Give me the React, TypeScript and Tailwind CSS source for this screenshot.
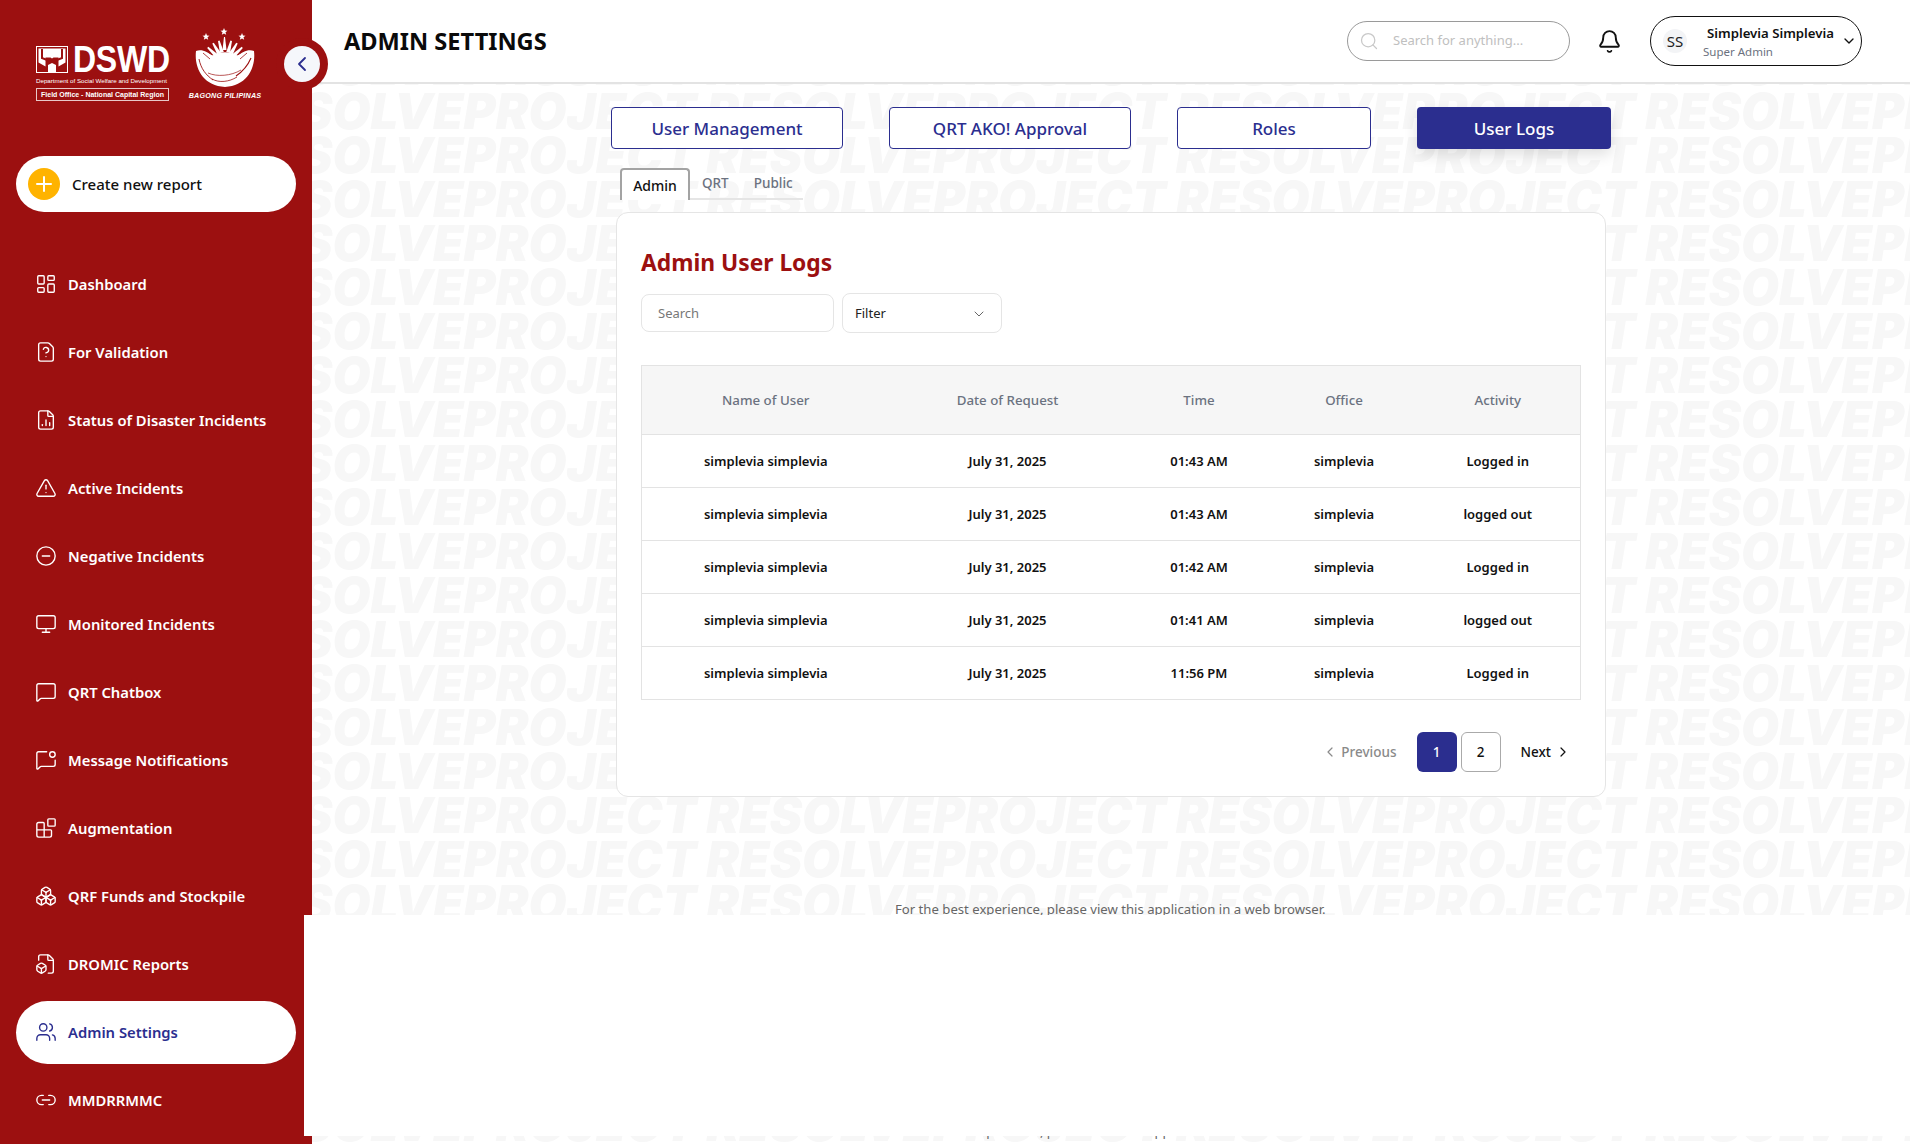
import React from 'react';
import {
  LayoutDashboard, FileQuestionMark, FileChartColumn, TriangleAlert, CircleMinus, Monitor,
  MessageSquare, MessageSquareDot, Blocks, Boxes, FileBox, Users, Link2, Plus, ChevronLeft,
  ChevronRight, ChevronDown, Search, Bell,
} from 'lucide-react';

const nav = [
  { label: 'Dashboard', Icon: LayoutDashboard },
  { label: 'For Validation', Icon: FileQuestionMark },
  { label: 'Status of Disaster Incidents', Icon: FileChartColumn },
  { label: 'Active Incidents', Icon: TriangleAlert },
  { label: 'Negative Incidents', Icon: CircleMinus },
  { label: 'Monitored Incidents', Icon: Monitor },
  { label: 'QRT Chatbox', Icon: MessageSquare },
  { label: 'Message Notifications', Icon: MessageSquareDot },
  { label: 'Augmentation', Icon: Blocks },
  { label: 'QRF Funds and Stockpile', Icon: Boxes },
  { label: 'DROMIC Reports', Icon: FileBox },
  { label: 'Admin Settings', Icon: Users, active: true },
  { label: 'MMDRRMMC', Icon: Link2 },
];

const rows = [
  ['simplevia simplevia', 'July 31, 2025', '01:43 AM', 'simplevia', 'Logged in'],
  ['simplevia simplevia', 'July 31, 2025', '01:43 AM', 'simplevia', 'logged out'],
  ['simplevia simplevia', 'July 31, 2025', '01:42 AM', 'simplevia', 'Logged in'],
  ['simplevia simplevia', 'July 31, 2025', '01:41 AM', 'simplevia', 'logged out'],
  ['simplevia simplevia', 'July 31, 2025', '11:56 PM', 'simplevia', 'Logged in'],
];

const topTabs = [
  { label: 'User Management', w: 'w-[232px]' },
  { label: 'QRT AKO! Approval', w: 'w-[242px]' },
  { label: 'Roles', w: 'w-[194px]' },
  { label: 'User Logs', w: 'w-[194px]', active: true },
];

function Watermark() {
  return (
    <div aria-hidden className="absolute inset-0 overflow-hidden pt-[46px] select-none">
      {Array.from({ length: 25 }).map((_, i) => (
        <div
          key={i}
          className="h-[44px] leading-[44px] whitespace-nowrap text-[49px] font-black italic text-[#f7f7f7] font-['Inter',sans-serif] -ml-[6px]"
        >
          {'PROJECT RESOLVE'.repeat(5)}
        </div>
      ))}
    </div>
  );
}

function Emblem() {
  const rays = [-62, -46, -30, -15, 0, 15, 30, 46, 62];
  return (
    <svg width="60" height="62" viewBox="0 0 60 62" className="-mt-[5px]">
      <g fill="white">
        <path d="M29 0l1 2.500 2.500.2-2 1.600.7 2.500-2.200-1.400-2.200 1.400.7-2.500-2-1.600 2.500-.2z" />
        <path d="M11 5l1 2.500 2.500.2-2 1.600.7 2.500-2.200-1.400-2.200 1.400.7-2.500-2-1.600 2.500-.2z" />
        <path d="M47 5l1 2.500 2.500.2-2 1.600.7 2.500-2.200-1.400-2.200 1.400.7-2.500-2-1.600 2.500-.2z" />
        {rays.map((a) => (
          <path
            key={a}
            d={a === 0 ? 'M27.500 22L29 9l1 0 1.500 13z' : 'M28 24L29.200 12h1.600L32 24z'}
            transform={`rotate(${a} 30 36)`}
          />
        ))}
        <path d="M1 23 C7 21 13 24 17 28 C24 23 36 23 43 28 C47 24 53 21 59 23 C61 40 52 58 30 59 C8 58 -1 40 1 23z" />
      </g>
      <g stroke="#9c1010" fill="none">
        <path d="M8 25l7 6" strokeWidth="0.800" />
        <path d="M52 25l-7 6" strokeWidth="0.800" />
        <path d="M13 45 C22 49 36 48 46 42" strokeWidth="0.700" />
        <path d="M17 51 C24 55 34 54 42 49" strokeWidth="0.800" />
        <path d="M4 31 C6 41 11 47 18 52" strokeWidth="0.900" />
        <path d="M56 30 C53 37 47 44 41 48" strokeWidth="1.100" />
      </g>
    </svg>
  );
}

function Logo() {
  return (
    <div className="flex h-[156px] pl-9 pt-[33px] gap-[20px] text-white">
      <div className="w-[133px]">
        <div className="flex items-center h-[27px] mt-[13px] gap-[5px]">
          <svg width="32" height="27" viewBox="0 0 32 27" fill="none" stroke="white" className="shrink-0">
            <rect x="0.5" y="0.5" width="31" height="26" strokeWidth="1" />
            <path d="M2.5 2.5h27v14l-7 4v-9h-5l-1.500 1-1.500-1h-5v9l-7-4z" fill="white" stroke="none" />
            <path d="M6 3v9l10 4 10-4V3" stroke="#9c1010" strokeWidth="2" />
            <path d="M12 19l4-2 4 2v7h-8z" fill="white" stroke="none" />
          </svg>
          <span className="block origin-left scale-x-[0.89] text-[36px] leading-[27px] font-bold font-['Liberation_Sans',sans-serif] tracking-[-0.3px]">
            DSWD
          </span>
        </div>
        <div className="mt-[3px] text-[6.2px] leading-[9px] whitespace-nowrap font-['Liberation_Sans',sans-serif]">
          Department of Social Welfare and Development
        </div>
        <div className="mt-[3px] h-[13px] border border-[#e8c8c8] text-[7px] leading-[11px] font-bold text-center whitespace-nowrap font-['Liberation_Sans',sans-serif]">
          Field Office - National Capital Region
        </div>
      </div>
      <div className="w-[74px] -ml-[1px] flex flex-col items-center">
        <Emblem />
        <div className="mt-[1px] text-[7.200px] leading-[9px] font-bold italic whitespace-nowrap font-['Liberation_Sans',sans-serif] tracking-[0.2px]">
          BAGONG PILIPINAS
        </div>
      </div>
    </div>
  );
}

function Sidebar() {
  return (
    <aside className="relative z-20 w-[312px] shrink-0 h-full bg-[#9c1010]">
      <Logo />
      <div className="absolute left-[276px] top-[38px] w-[52px] h-[52px] rounded-full bg-[#9c1010] flex items-center justify-center">
        <button className="w-9 h-9 rounded-full bg-[#f5f7fb] flex items-center justify-center text-[#2b2e8f]">
          <ChevronLeft size={24} strokeWidth={1.800} />
        </button>
      </div>
      <div className="mx-4 w-[280px] h-[56px] rounded-[28px] bg-white flex items-center pl-3 gap-[12px]">
        <span className="w-8 h-8 rounded-full bg-[#ffb300] flex items-center justify-center text-white">
          <Plus size={24} strokeWidth={2} />
        </span>
        <span className="text-[15px] font-medium text-[#111]">Create new report</span>
      </div>
      <nav className="mt-[38px]">
        {nav.map(({ label, Icon, active }) => (
          <div key={label} className="h-[68px] flex items-center">
            <div
              className={
                active
                  ? 'mx-4 w-[280px] h-[63px] rounded-[32px] bg-white flex items-center pl-[19px] gap-[11px] text-[#2b2e8f]'
                  : 'mx-4 w-[280px] h-[63px] flex items-center pl-[19px] gap-[11px] text-white'
              }
            >
              <Icon size={22} strokeWidth={1.500} />
              <span className="text-[14.8px] font-semibold whitespace-nowrap">{label}</span>
            </div>
          </div>
        ))}
      </nav>
    </aside>
  );
}

function Header() {
  return (
    <header className="relative z-10 h-[84px] shrink-0 bg-white border-b-2 border-[#e3e3e3] flex items-center pl-[32px]">
      <h1 className="text-[23.6px] font-bold text-[#0a0a0a] mt-[2px]">ADMIN SETTINGS</h1>
      <div className="ml-auto flex items-center">
        <div className="w-[223px] h-10 rounded-full border border-[#9a9a9a] bg-white flex items-center pl-[11px] gap-[14px]">
          <Search size={20} strokeWidth={1.500} className="text-[#c8c8c8]" />
          <span className="text-[13px] text-[#c0c0c0]">Search for anything...</span>
        </div>
        <Bell size={25} strokeWidth={1.800} className="ml-[27px] text-[#111]" />
        <div className="relative ml-[28px] mr-[48px] w-[212px] h-[50px] rounded-full border border-[#111] bg-white flex items-center pl-[12px]">
          <span className="w-6 h-6 rounded-full bg-[#f3f4f6] flex items-center justify-center text-[15px] text-[#222] shrink-0">SS</span>
          <div className="ml-[16px] flex flex-col">
            <span className="pl-[4px] text-[13.2px] leading-[20px] font-semibold text-[#111] whitespace-nowrap">Simplevia Simplevia</span>
            <span className="text-[11.5px] leading-[16px] text-[#6b7280] mt-[1px]">Super Admin</span>
          </div>
          <ChevronDown size={16} strokeWidth={2} className="absolute right-[4px] top-[16px] text-[#111]" />
        </div>
      </div>
    </header>
  );
}

function Main() {
  return (
    <main className="relative z-10 flex-1 min-w-0 flex flex-col">
      <Header />
      <div className="flex flex-col pl-[299px] pt-[23px]">
        <div className="flex gap-[46px]">
          {topTabs.map((t) => (
            <button
              key={t.label}
              className={
                (t.active
                  ? 'bg-[#2b2e8f] text-white shadow-[0_6px_14px_rgba(0,0,0,0.12)] '
                  : 'bg-white text-[#2b2e8f] border border-[#2b2e8f] ') +
                t.w +
                ' h-[42px] pt-[1px] rounded-[4px] text-[17px] font-medium'
              }
            >
              {t.label}
            </button>
          ))}
        </div>

        <div className="flex ml-[9px] mt-[19px] h-[32px] w-[183px] border-b-2 border-[#e5e5e5]">
          <div className="w-[70px] h-[32px] border-2 border-b-0 border-[#a3a3a3] rounded-t-[4px] bg-white flex items-center justify-center text-[14px] font-medium text-[#111]">
            Admin
          </div>
          <span className="ml-[12px] mt-[5px] text-[13.5px] text-[#6b7280] font-medium">QRT</span>
          <span className="ml-[25px] mt-[5px] text-[13.5px] text-[#6b7280] font-medium">Public</span>
        </div>

        <section className="ml-[5px] mt-[12px] w-[990px] h-[585px] rounded-[12px] border border-[#e5e5e5] bg-white px-[24px] pt-[30px]">
          <h2 className="text-[22.800px] leading-[40px] font-bold text-[#9c1010]">Admin User Logs</h2>
          <div className="flex items-center gap-[8px] mt-[10px]">
            <div className="w-[193px] h-[38px] pt-[1px] rounded-[8px] border border-[#e5e5e5] flex items-center pl-[16px] text-[13px] text-[#777]">
              Search
            </div>
            <div className="w-[160px] h-[40px] pt-[1px] rounded-[8px] border border-[#e5e5e5] flex items-center justify-between pl-[12px] pr-[14px] text-[13px] text-[#222]">
              Filter
              <ChevronDown size={16} strokeWidth={1.500} className="text-[#666]" />
            </div>
          </div>

          <table className="mt-[32px] w-[939px] table-fixed border border-[#e3e3e3] text-[13px] text-center border-collapse">
            <colgroup>
              <col className="w-[248px]" />
              <col className="w-[236px]" />
              <col className="w-[147px]" />
              <col className="w-[143px]" />
              <col className="w-[165px]" />
            </colgroup>
            <thead>
              <tr className="h-[69px] bg-[#f6f6f6] border-b border-[#e3e3e3] text-[#6b7280]">
                {['Name of User', 'Date of Request', 'Time', 'Office', 'Activity'].map((h) => (
                  <th key={h} className="pt-[2px] text-[13.3px] font-medium">{h}</th>
                ))}
              </tr>
            </thead>
            <tbody>
              {rows.map((r, i) => (
                <tr key={i} className="h-[53px] border-b border-[#e3e3e3] bg-white text-[#111]">
                  {r.map((c, j) => (
                    <td key={j} className="pt-[2px] font-semibold">{c}</td>
                  ))}
                </tr>
              ))}
            </tbody>
          </table>

          <div className="flex items-center mt-[32px] w-[939px] justify-end text-[13.5px] font-medium pr-[9px]">
            <span className="flex items-center text-[#8a8a8a]">
              <ChevronLeft size={16} strokeWidth={1.800} />
              <span className="ml-[3px]">Previous</span>
            </span>
            <span className="ml-[20px] w-10 h-10 rounded-[6px] bg-[#2b2e8f] text-white flex items-center justify-center">1</span>
            <span className="ml-[4px] w-10 h-10 rounded-[6px] border border-[#aaa] bg-white text-[#111] flex items-center justify-center">2</span>
            <span className="ml-[20px] flex items-center text-[#111]">
              Next
              <ChevronRight size={16} strokeWidth={1.800} className="ml-[4px]" />
            </span>
          </div>
        </section>

        <p className="mt-[102px] ml-[284px] h-[20px] leading-[20px] text-[13.15px] text-[#666] whitespace-nowrap">
          For the best experience, please view this application in a web browser.
        </p>
      </div>
      <p className="absolute left-[583px] top-[1121px] leading-[20px] text-[13.15px] text-[#666] whitespace-nowrap">
        For the best experience, please view this application in a web browser.
      </p>
    </main>
  );
}

export default function App() {
  return (
    <div className="relative flex w-[1910px] h-[1144px] overflow-hidden bg-white font-['Noto_Sans',sans-serif]">
      <Watermark />
      <Sidebar />
      <Main />
      <div className="absolute z-30 left-[304px] right-0 top-[915px] h-[221px] bg-white" />
    </div>
  );
}
